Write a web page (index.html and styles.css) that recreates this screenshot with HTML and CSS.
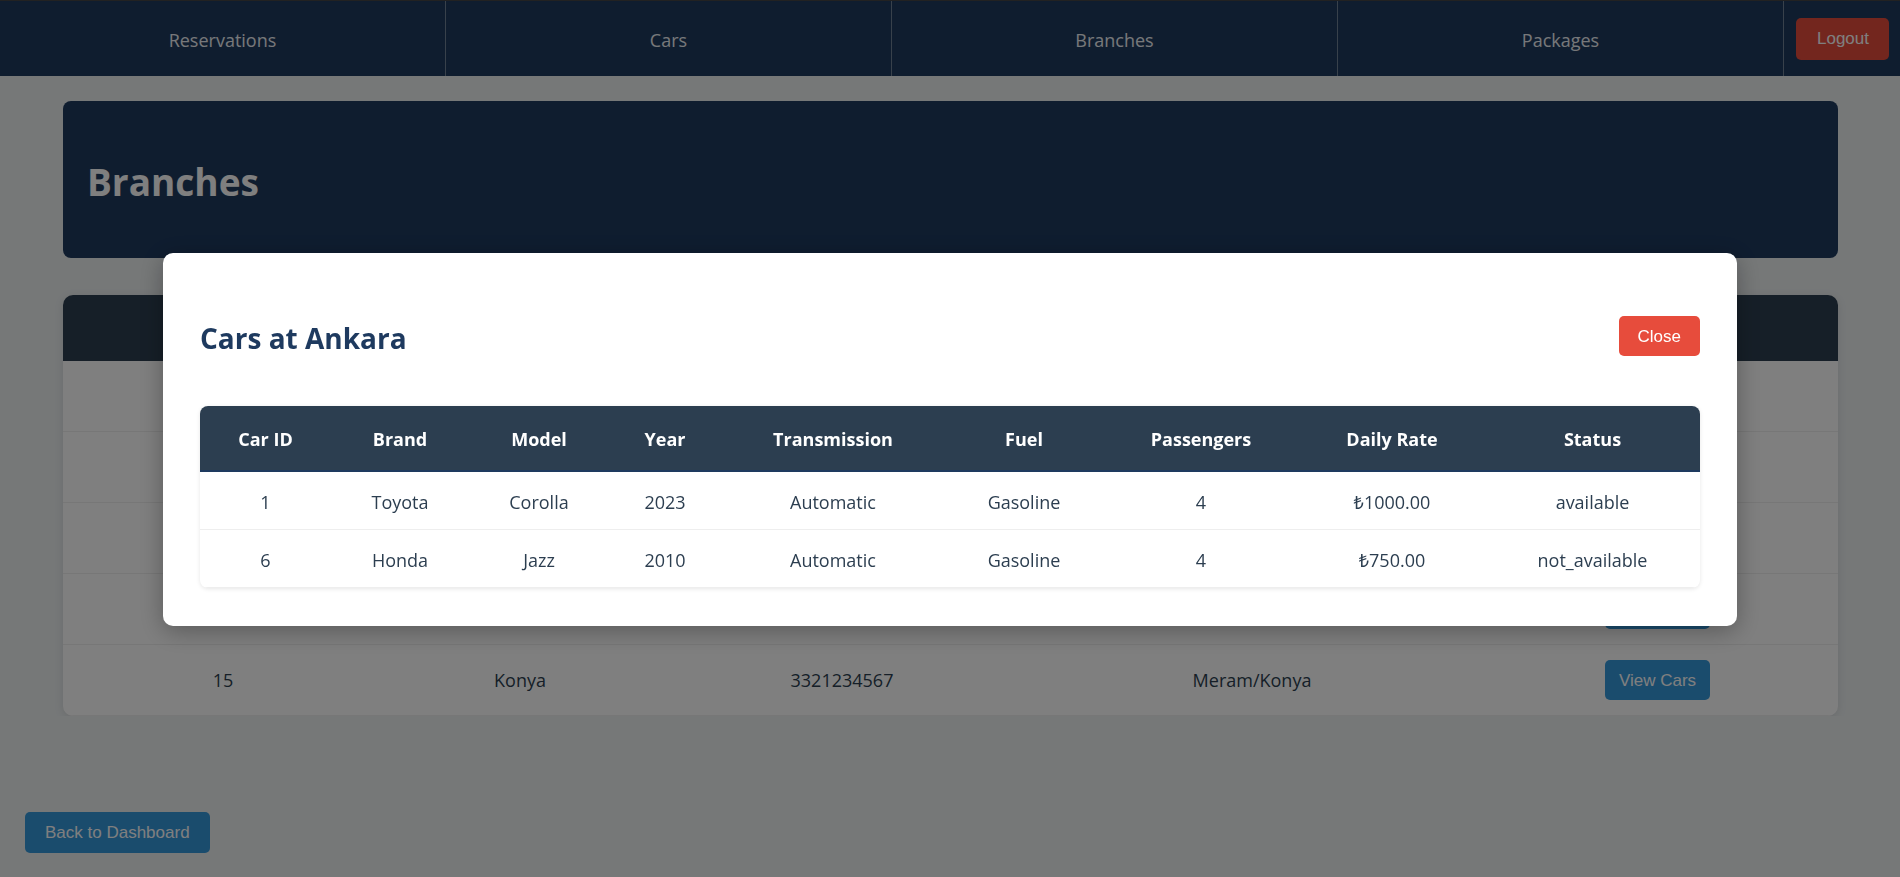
FILE: index.html
```html
<!DOCTYPE html>
<html lang="en">
<head>
<meta charset="utf-8">
<title>Branches</title>
<link rel="stylesheet" href="styles.css">
</head>
<body>
<nav class="topnav">
  <a class="nav-link" href="#">Reservations</a>
  <a class="nav-link" href="#">Cars</a>
  <a class="nav-link" href="#">Branches</a>
  <a class="nav-link" href="#">Packages</a>
  <div class="nav-logout"><button class="btn btn-danger btn-logout">Logout</button></div>
</nav>

<main class="page">
  <header class="page-header"><h1>Branches</h1></header>

  <section class="table-card">
    <table class="branch-table">
      <thead>
        <tr><th>Branch ID</th><th>Name</th><th>Phone</th><th>Address</th><th>Actions</th></tr>
      </thead>
      <tbody>
        <tr><td>1</td><td>Istanbul</td><td>2121234567</td><td>Kadıköy/Istanbul</td><td><button class="btn btn-primary btn-view">View Cars</button></td></tr>
        <tr><td>2</td><td>Ankara</td><td>3121234567</td><td>Çankaya/Ankara</td><td><button class="btn btn-primary btn-view">View Cars</button></td></tr>
        <tr><td>3</td><td>Izmir</td><td>2321234567</td><td>Konak/Izmir</td><td><button class="btn btn-primary btn-view">View Cars</button></td></tr>
        <tr><td>4</td><td>Antalya</td><td>2421234567</td><td>Muratpaşa/Antalya</td><td><button class="btn btn-primary btn-view">View Cars</button></td></tr>
        <tr><td>15</td><td>Konya</td><td>3321234567</td><td>Meram/Konya</td><td><button class="btn btn-primary btn-view">View Cars</button></td></tr>
      </tbody>
    </table>
  </section>
</main>

<button class="btn btn-primary back-btn">Back to Dashboard</button>

<div class="modal-overlay">
  <div class="modal">
    <div class="modal-header">
      <h2>Cars at Ankara</h2>
      <button class="btn btn-danger btn-close">Close</button>
    </div>
    <div class="table-wrap">
      <table class="cars-table">
        <thead>
          <tr><th>Car ID</th><th>Brand</th><th>Model</th><th>Year</th><th>Transmission</th><th>Fuel</th><th>Passengers</th><th>Daily Rate</th><th>Status</th></tr>
        </thead>
        <tbody>
          <tr><td>1</td><td>Toyota</td><td>Corolla</td><td>2023</td><td>Automatic</td><td>Gasoline</td><td>4</td><td>₺1000.00</td><td>available</td></tr>
          <tr><td>6</td><td>Honda</td><td>Jazz</td><td>2010</td><td>Automatic</td><td>Gasoline</td><td>4</td><td>₺750.00</td><td>not_available</td></tr>
        </tbody>
      </table>
    </div>
  </div>
</div>
</body>
</html>
```

FILE: styles.css
```css
* { box-sizing: content-box; }

body {
  margin: 0;
  background: #ecf0f1;
  font-family: "Open Sans", "Noto Sans", "DejaVu Sans", sans-serif;
  font-size: 18px;
  color: #2c3e50;
}

/* ---------- buttons ---------- */
.btn {
  font-family: "Liberation Sans", Arial, sans-serif;
  font-size: 17px;
  color: #fff;
  border: none;
  border-radius: 5px;
  cursor: pointer;
  line-height: 1;
}
.btn-danger { background: #e74c3c; }
.btn-primary { background: #3498db; }

/* ---------- top nav ---------- */
.topnav {
  display: flex;
  height: 75px;
  background: #1e3a5f;
  border-top: 1px solid #444;
}
.nav-link {
  flex: 1 1 0;
  display: flex;
  align-items: center;
  justify-content: center;
  color: #eef1f4;
  text-decoration: none;
  border-right: 1px solid #708396;
  font-size: 18px;
  padding-top: 2px;
}
.nav-logout {
  display: flex;
  align-items: center;
  padding: 0 11px 0 12px;
}
.btn-logout {
  height: 42px;
  padding: 0 20px 0 21px;
}

/* ---------- page ---------- */
.page {
  padding: 25px 62px 0 63px;
}
.page-header {
  height: 157px;
  padding: 0 24px;
  display: flex;
  align-items: center;
  background: #1e3a5f;
  border-radius: 8px;
}
.page-header h1 {
  margin: 4px 0 0;
  font-size: 37px;
  line-height: 48px;
  font-weight: 700;
  color: #fff;
}

.table-card {
  margin-top: 37px;
  background: #fff;
  border-radius: 10px;
  overflow: hidden;
  box-shadow: 0 2px 10px rgba(0, 0, 0, 0.1);
}
.branch-table {
  width: 100%;
  border-collapse: collapse;
  table-layout: fixed;
}
.branch-table th,
.branch-table td {
  box-sizing: border-box;
}
.branch-table th {
  background: #2c3e50;
  color: #fff;
  font-weight: 700;
  padding: 21px 15px;
  line-height: 24px;
}
.branch-table th:nth-child(1) { width: 320px; }
.branch-table th:nth-child(2) { width: 274px; }
.branch-table th:nth-child(3) { width: 370px; }
.branch-table th:nth-child(4) { width: 450px; }
.branch-table td {
  padding: 15px;
  line-height: 24px;
  text-align: center;
  vertical-align: middle;
  border-bottom: 1px solid #eee;
  color: #2c3e50;
}
.btn-view {
  height: 40px;
  padding: 0 14px;
}

.back-btn {
  position: fixed;
  left: 25px;
  bottom: 24px;
  height: 41px;
  padding: 0 20px;
}

/* ---------- modal ---------- */
.modal-overlay {
  position: fixed;
  inset: 0;
  background: rgba(0, 0, 0, 0.5);
  display: flex;
  align-items: center;
  justify-content: center;
}
.modal {
  width: 1500px;
  padding: 37px 37px 38px;
  background: #fff;
  border-radius: 10px;
  box-shadow: 0 5px 25px rgba(0, 0, 0, 0.3);
  margin-top: 2px;
}
.modal-header {
  display: flex;
  align-items: center;
  justify-content: space-between;
  margin: 24px 0 48px;
}
.modal-header h2 {
  margin: 0;
  padding-top: 4px;
  font-size: 28px;
  line-height: 40px;
  font-weight: 700;
  color: #1e3a5f;
}
.btn-close {
  height: 40px;
  padding: 0 19px;
}

.table-wrap {
  border-radius: 8px;
  overflow: hidden;
  box-shadow: 0 1px 4px rgba(0, 0, 0, 0.1);
}
.cars-table {
  width: 100%;
  border-collapse: collapse;
  table-layout: fixed;
}
.cars-table th,
.cars-table td {
  box-sizing: border-box;
}
.cars-table th {
  background: #2c3e50;
  color: #fff;
  font-weight: 700;
  padding: 21px 10px 19px;
  line-height: 24px;
  border-bottom: 2px solid #1e3a5f;
}
.cars-table th:nth-child(1) { width: 131px; }
.cars-table th:nth-child(2) { width: 138px; }
.cars-table th:nth-child(3) { width: 140px; }
.cars-table th:nth-child(4) { width: 112px; }
.cars-table th:nth-child(5) { width: 224px; }
.cars-table th:nth-child(6) { width: 158px; }
.cars-table th:nth-child(7) { width: 196px; }
.cars-table th:nth-child(8) { width: 186px; }
.cars-table td {
  padding: 18px 10px 14px;
  line-height: 25px;
  text-align: center;
  border-bottom: 1px solid #eee;
  color: #2c3e50;
}
```
